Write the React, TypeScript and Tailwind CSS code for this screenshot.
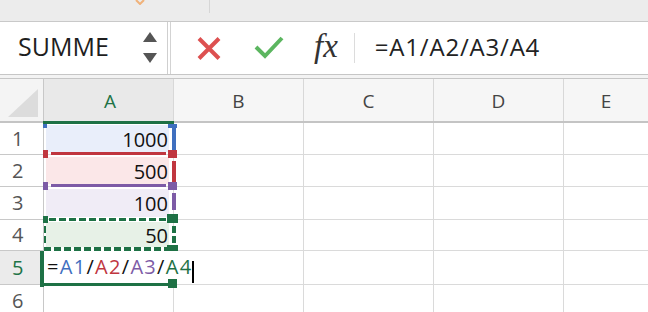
import React from "react";

const dashH =
  "bg-[repeating-linear-gradient(90deg,#1e7145_0px,#1e7145_7px,#ffffff_7px,#ffffff_10px)]";
const dashV =
  "bg-[repeating-linear-gradient(180deg,#1e7145_0px,#1e7145_7px,#ffffff_7px,#ffffff_10px)]";

type Row = { n: number; h: string; val?: string; fill?: string };

const rows: Row[] = [
  { n: 1, h: "h-[32px]", val: "1000", fill: "bg-[#e9eefa]" },
  { n: 2, h: "h-[32px]", val: "500", fill: "bg-[#fbe7e8]" },
  { n: 3, h: "h-[33px]", val: "100", fill: "bg-[#f0ecf6]" },
  { n: 4, h: "h-[31px]", val: "50", fill: "bg-[#e7f1e7]" },
  { n: 5, h: "h-[34px]" },
  { n: 6, h: "h-[32px]" },
];

export default function App() {
  return (
    <div className="relative w-[648px] h-[312px] overflow-hidden bg-white font-['Open_Sans',sans-serif] text-[#222]">
      {/* top strip */}
      <div className="relative h-[22px] bg-[#ececec] border-b border-[#c9c9c9]">
        <svg className="absolute left-[134px] top-0" width="12" height="5" viewBox="0 0 12 5">
          <path d="M2 0 L6 4 L10 0" fill="none" stroke="#f0b27a" strokeWidth="2" />
        </svg>
        <div className="absolute left-[209px] top-0 w-[1px] h-[13px] bg-[#d6d6d6]" />
      </div>

      {/* formula bar */}
      <div className="flex h-[53px] border-b border-[#c6c6c6] bg-white">
        <div className="flex items-center w-[168px] border-r border-[#cfcfcf] pl-[18px] pr-[10px]">
          <span className="flex-1 text-[25px] leading-none text-[#1e1e1e] -mt-[3px]">SUMME</span>
          <div className="flex flex-col items-center gap-[11px] -mt-[1px]">
            <svg width="14" height="10" viewBox="0 0 14 10">
              <polygon points="7,0 14,10 0,10" fill="#555" />
            </svg>
            <svg width="14" height="10" viewBox="0 0 14 10">
              <polygon points="0,0 14,0 7,10" fill="#555" />
            </svg>
          </div>
        </div>
        <div className="w-[2px] bg-white" />
        <div className="flex-1 flex items-center border-l border-[#d3d3d3]">
          <svg className="ml-[26px]" width="24" height="23" viewBox="0 0 24 23">
            <path d="M2 1.5 L22 21.5 M22 1.5 L2 21.5" stroke="#dd5050" strokeWidth="4" />
          </svg>
          <svg className="ml-[33px]" width="30" height="24" viewBox="0 0 30 24">
            <path d="M2 11 L11 20 L28 2" fill="none" stroke="#5cb660" strokeWidth="4" />
          </svg>
          <span className="ml-[30px] font-['Liberation_Serif',serif] italic text-[33px] leading-none text-[#333] -mt-[4px]">
            fx
          </span>
          <div className="ml-[16px] w-[1px] h-[30px] bg-[#dcdcdc]" />
          <span className="ml-[20px] text-[24px] leading-none tracking-[0.8px] text-[#222] -mt-[2px]">
            =A1/A2/A3/A4
          </span>
        </div>
      </div>

      {/* separator strip */}
      <div className="h-[4px] bg-[#f3f3f3] border-b border-[#c6c6c6]" />

      {/* column headers */}
      <div className="flex h-[44px] border-b-2 border-[#c4c4c4] bg-[#f6f6f6]">
        <div className="w-[44px] border-r border-[#c8c8c8] bg-[#f4f4f4]">
          <svg width="43" height="42" viewBox="0 0 43 42">
            <polygon points="8,38 38,38 38,10" fill="#dcdcdc" />
          </svg>
        </div>
        {["A", "B", "C", "D", "E"].map((c) => (
          <div
            key={c}
            className={
              c === "A"
                ? "w-[130px] shrink-0 flex items-center justify-center border-r border-[#d8d8d8] bg-[#e9e9e9] text-[19px] text-[#217346] pt-[3px] pl-[3px]"
                : c === "E"
                ? "flex-1 flex items-center justify-center text-[19px] text-[#444] pt-[3px]"
                : "w-[130px] shrink-0 flex items-center justify-center border-r border-[#d8d8d8] text-[19px] text-[#444] pt-[3px]"
            }
          >
            {c}
          </div>
        ))}
      </div>

      {/* rows */}
      {rows.map((r) => (
        <div key={r.n} className={`flex ${r.h}`}>
          <div
            className={
              r.n === 5
                ? "w-[44px] shrink-0 flex items-center pl-[12px] border-r border-b border-[#c8c8c8] bg-[#ebebeb] text-[20px] text-[#217346]"
                : "w-[44px] shrink-0 flex items-center pl-[12px] border-r border-b border-[#c8c8c8] bg-white text-[20px] text-[#555]"
            }
          >
            {r.n}
          </div>
          <div className="w-[130px] shrink-0 border-r border-b border-[#dadada] pl-[2px] pr-[4px] py-[2px]">
            {r.val && (
              <div className={`h-full flex items-center justify-end pr-[1px] pt-[2px] text-[20px] text-[#111] ${r.fill}`}>
                {r.val}
              </div>
            )}
          </div>
          <div className="w-[130px] shrink-0 border-r border-b border-[#dadada]" />
          <div className="w-[130px] shrink-0 border-r border-b border-[#dadada]" />
          <div className="w-[130px] shrink-0 border-r border-b border-[#dadada]" />
          <div className="flex-1 border-b border-[#dadada]" />
        </div>
      ))}

      {/* header A underline */}
      <div className="absolute left-[43px] top-[121px] w-[131px] h-[3px] bg-[#1e7145]" />

      {/* A1 blue reference */}
      <div className="absolute left-[43px] top-[124px] w-[4px] h-[4px] bg-[#3f6fbf]" />
      <div className="absolute left-[168px] top-[124px] w-[9px] h-[4px] bg-[#3f6fbf]" />
      <div className="absolute left-[172px] top-[128px] w-[4px] h-[22px] bg-[#3f6fbf]" />

      {/* A2 red reference */}
      <div className="absolute left-[51px] top-[152px] w-[115px] h-[3px] bg-[#c0363f]" />
      <div className="absolute left-[43px] top-[150px] w-[5px] h-[8px] bg-[#c0363f]" />
      <div className="absolute left-[168px] top-[150px] w-[9px] h-[8px] bg-[#c0363f]" />
      <div className="absolute left-[172px] top-[161px] w-[4px] h-[21px] bg-[#c0363f]" />

      {/* A3 purple reference */}
      <div className="absolute left-[51px] top-[184px] w-[115px] h-[3px] bg-[#7d5ba6]" />
      <div className="absolute left-[43px] top-[182px] w-[5px] h-[8px] bg-[#7d5ba6]" />
      <div className="absolute left-[168px] top-[182px] w-[9px] h-[8px] bg-[#7d5ba6]" />
      <div className="absolute left-[172px] top-[193px] w-[4px] h-[17px] bg-[#7d5ba6]" />

      {/* A4 green dashed reference */}
      <div className={`absolute left-[49px] top-[218px] w-[118px] h-[3px] ${dashH}`} />
      <div className="absolute left-[43px] top-[216px] w-[5px] h-[7px] bg-[#1e7145]" />
      <div className="absolute left-[167px] top-[214px] w-[11px] h-[9px] bg-[#1e7145]" />
      <div className={`absolute left-[172px] top-[226px] w-[4px] h-[19px] ${dashV}`} />
      <div className={`absolute left-[44px] top-[226px] w-[2px] h-[19px] ${dashV}`} />
      <div className={`absolute left-[44px] top-[247px] w-[123px] h-[4px] ${dashH}`} />
      <div className="absolute left-[167px] top-[245px] w-[11px] h-[8px] bg-[#1e7145]" />

      {/* A5 active editor */}
      <div className="absolute left-[44px] top-[251px] w-[154px] h-[32px] bg-white flex items-center pl-[3px] text-[20px] tracking-[1.3px] text-[#111]">
        <span>=</span>
        <span className="text-[#3f6fbf]">A1</span>
        <span>/</span>
        <span className="text-[#c0363f]">A2</span>
        <span>/</span>
        <span className="text-[#7d5ba6]">A3</span>
        <span>/</span>
        <span className="text-[#1e7145]">A4</span>
        <span className="self-end w-[2px] h-[22px] bg-black" />
      </div>
      <div className="absolute left-[40px] top-[251px] w-[4px] h-[36px] bg-[#1e7145]" />
      <div className="absolute left-[40px] top-[283px] w-[128px] h-[3px] bg-[#1e7145]" />
      <div className="absolute left-[168px] top-[279px] w-[9px] h-[9px] bg-[#1e7145]" />
    </div>
  );
}
